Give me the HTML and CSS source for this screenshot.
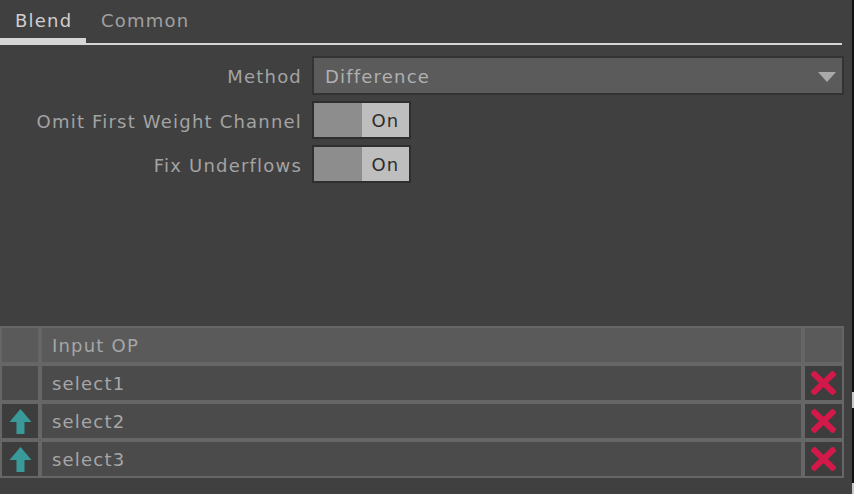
FILE: index.html
```html
<!DOCTYPE html>
<html>
<head>
<meta charset="utf-8">
<link rel="stylesheet" href="styles.css">
</head>
<body>
<div class="app">
  <div class="main">
    <div class="tabbar">
      <div class="tab active">Blend</div>
      <div class="tab">Common</div>
    </div>
    <div class="form">
      <div class="row">
        <div class="label">Method</div>
        <div class="dropdown">
          <span>Difference</span>
          <svg class="caret" width="18" height="10" viewBox="0 0 18 10"><path d="M0 0H18L9 10Z" fill="#a9a9a9"/></svg>
        </div>
      </div>
      <div class="row">
        <div class="label">Omit First Weight Channel</div>
        <div class="toggle"><div class="knob"></div><div class="state">On</div></div>
      </div>
      <div class="row">
        <div class="label">Fix Underflows</div>
        <div class="toggle"><div class="knob"></div><div class="state">On</div></div>
      </div>
    </div>
    <div class="table">
      <div class="cell head"></div>
      <div class="cell head text">Input OP</div>
      <div class="cell head"></div>

      <div class="cell"></div>
      <div class="cell text">select1</div>
      <div class="cell dark icon"><svg width="25" height="24" viewBox="0 0 25 24"><path d="M3.5 3.5L21.5 20.5M21.5 3.5L3.5 20.5" stroke="#d2194a" stroke-width="6" stroke-linecap="square"/></svg></div>

      <div class="cell dark icon"><svg width="23" height="25" viewBox="0 0 23 25"><path d="M11.5 0L22.5 13H15.5V25H7.5V13H0.5Z" fill="#3a9a9a"/></svg></div>
      <div class="cell text">select2</div>
      <div class="cell dark icon"><svg width="25" height="24" viewBox="0 0 25 24"><path d="M3.5 3.5L21.5 20.5M21.5 3.5L3.5 20.5" stroke="#d2194a" stroke-width="6" stroke-linecap="square"/></svg></div>

      <div class="cell dark icon"><svg width="23" height="25" viewBox="0 0 23 25"><path d="M11.5 0L22.5 13H15.5V25H7.5V13H0.5Z" fill="#3a9a9a"/></svg></div>
      <div class="cell text">select3</div>
      <div class="cell dark icon"><svg width="25" height="24" viewBox="0 0 25 24"><path d="M3.5 3.5L21.5 20.5M21.5 3.5L3.5 20.5" stroke="#d2194a" stroke-width="6" stroke-linecap="square"/></svg></div>
    </div>
  </div>
  <div class="scrollbar">
    <div class="thumb t1"></div>
    <div class="thumb t2"></div>
  </div>
</div>
</body>
</html>
```
FILE: styles.css
```css
html, body {
  margin: 0;
  padding: 0;
  background: #404040;
  width: 854px;
  height: 494px;
  overflow: hidden;
  font-family: "DejaVu Sans", Verdana, sans-serif;
  font-size: 18px;
  letter-spacing: 1.2px;
}
.app {
  display: flex;
  height: 494px;
}
.main {
  width: 852px;
  display: flex;
  flex-direction: column;
}
.scrollbar {
  width: 2px;
  background: #111;
  position: relative;
}
.thumb {
  position: absolute;
  left: 0;
  width: 2px;
  background: #c8c8c8;
}
.t1 { top: 392px; height: 16px; }
.t2 { top: 483px; height: 11px; }

.tabbar {
  display: flex;
  width: 842px;
  height: 43px;
  border-bottom: 2px solid #d6d6d6;
}
.tab {
  padding: 0 15px;
  line-height: 41px;
  color: #a0a0a0;
}
.tab.active {
  color: #cfcfcf;
  width: 56px;
  border-bottom: 5px solid #d6d6d6;
  height: 38px;
}
.form {
  display: flex;
  flex-direction: column;
  gap: 6px;
  padding-top: 11px;
}
.row {
  display: flex;
  align-items: center;
  gap: 10px;
}
.label {
  width: 302px;
  text-align: right;
  color: #a3a3a3;
  white-space: nowrap;
  padding-top: 2px;
}
.dropdown {
  box-sizing: border-box;
  width: 532px;
  height: 39px;
  background: #5b5b5b;
  border: 2px solid #333;
  display: flex;
  align-items: center;
  justify-content: space-between;
  padding: 2px 6px 0 11px;
  color: #b0b0b0;
}
.caret { margin-top: 0; }
.toggle {
  box-sizing: border-box;
  width: 99px;
  height: 38px;
  border: 2px solid #2e2e2e;
  display: flex;
}
.knob {
  width: 48px;
  background: #8d8d8d;
}
.state {
  flex: 1;
  background: #bebebe;
  color: #2c2c2c;
  text-align: center;
  line-height: 36px;
}
.table {
  margin-top: 143px;
  width: 844px;
  box-sizing: border-box;
  background: #666;
  padding: 2px;
  display: grid;
  grid-template-columns: 36px 1fr 37px;
  grid-auto-rows: 34px;
  gap: 4px;
}
.cell {
  background: #4b4b4b;
  color: #a6a6a6;
}
.cell.head {
  background: #5a5a5a;
}
.cell.text {
  padding-left: 10px;
  line-height: 36px;
}
.cell.dark {
  background: #3d3d3d;
}
.cell.icon {
  display: flex;
  align-items: center;
  justify-content: center;
}
```
